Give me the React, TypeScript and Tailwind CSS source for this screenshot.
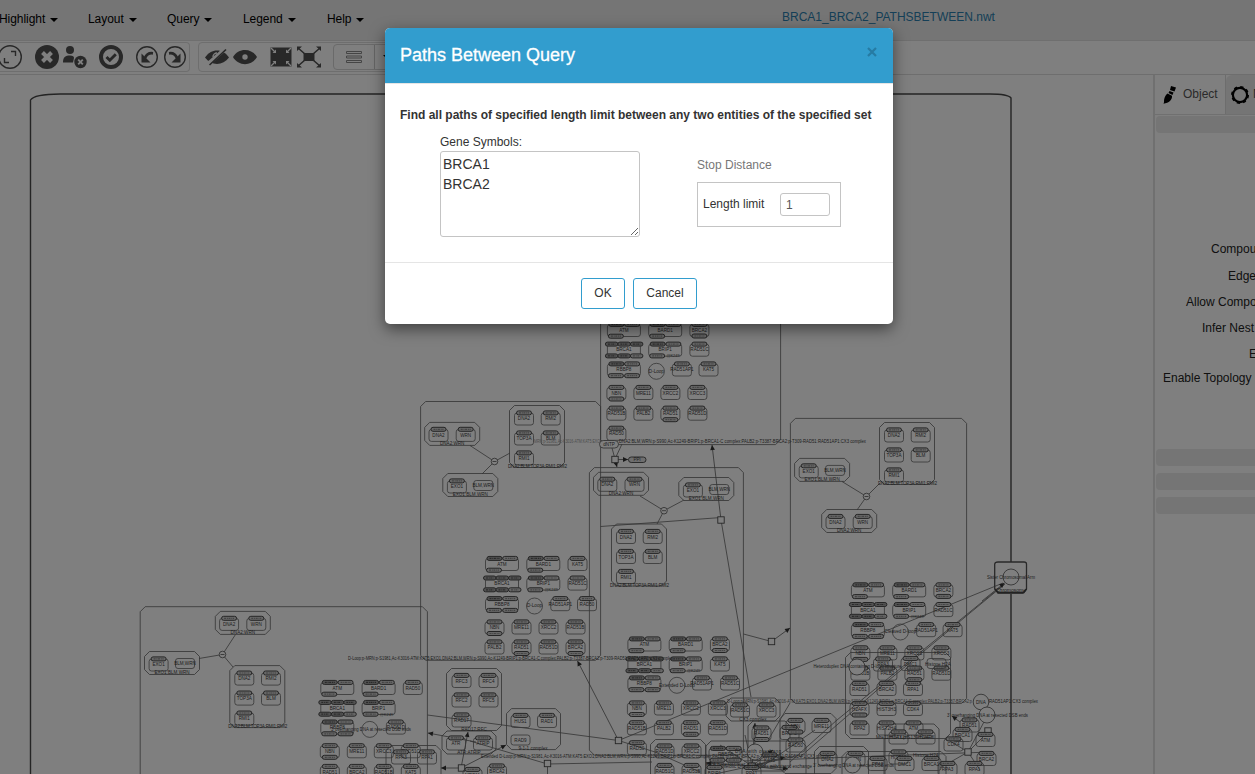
import React from "react";

const INK = "#6a6a6a";
const TXT = "#404040";

function Pill({ x, y, w = 15, dark = false }: { x: number; y: number; w?: number; dark?: boolean }) {
  return (
    <g>
      <rect x={x} y={y - 2} width={w} height={4} rx={2} fill={dark ? "#a4a4a4" : "#cfcfcf"} stroke="#4a4a4a" strokeWidth={1} />
      <path d={`M${x + 2.5} ${y}H${x + w - 2.5}`} stroke={dark ? "#555" : "#888"} strokeWidth={1.2} strokeDasharray="2 .8 1 .6" />
    </g>
  );
}

type NodeProps = { x: number; y: number; t: string; bottom?: boolean; plain?: boolean };

/* Small macromolecule; y is the vertical centre of its label. */
function Gene({ x, y, t, bottom, plain }: NodeProps) {
  return (
    <g>
      <rect x={x} y={plain ? y - 5 : y - 5.5} width={19} height={plain ? 10 : 12} rx={2.5} fill="none" stroke={INK} strokeWidth={0.8} />
      {!plain && <Pill x={x + 2} y={y - 5.6} />}
      {bottom && <Pill x={x + 2} y={y + 6} />}
      <text x={x + 9.5} y={y + 1.6} textAnchor="middle">{t}</text>
    </g>
  );
}

/* Wide macromolecule with several state variables. */
function Wide({ x, y, t, kind }: { x: number; y: number; t: string; kind: "one" | "two" | "three" }) {
  return (
    <g>
      <rect x={x} y={y - 5.5} width={33} height={12} rx={2.5} fill="none" stroke={INK} strokeWidth={0.8} />
      {kind === "three" ? (
        [-2, 10.5, 23].map((d) => (
          <g key={d}>
            <Pill x={x + d} y={y - 5.6} w={12.5} dark />
            <Pill x={x + d} y={y + 6.2} w={12.5} dark={d < 20} />
          </g>
        ))
      ) : (
        <>
          <Pill x={x + 1.5} y={y - 5.6} dark />
          <Pill x={x + 17.2} y={y - 5.6} />
          <Pill x={x + 1} y={y + 6.2} />
          {kind === "two" && <Pill x={x + 17.2} y={y + 6.2} />}
        </>
      )}
      <text x={x + 16.5} y={y + 1.6} textAnchor="middle">{t}</text>
    </g>
  );
}

function Oct({ x, y, w, h, c = 5, s = "#666", sw = 0.8 }: { x: number; y: number; w: number; h: number; c?: number; s?: string; sw?: number }) {
  return (
    <path
      d={`M${x + c} ${y}H${x + w - c}L${x + w} ${y + c}V${y + h - c}L${x + w - c} ${y + h}H${x + c}L${x} ${y + h - c}V${y + c}Z`}
      fill="none"
      stroke={s}
      strokeWidth={sw}
    />
  );
}

function Dna2Wrn({ x, y }: { x: number; y: number }) {
  return (
    <g>
      <Oct x={x} y={y} w={55} h={23} />
      <Gene x={x + 4.3} y={y + 12.5} t="DNA2" />
      <Gene x={x + 31.5} y={y + 12.5} t="WRN" />
      <text x={x + 27.5} y={y + 22.6} textAnchor="middle">DNA2:WRN</text>
    </g>
  );
}

function Exo1({ x, y }: { x: number; y: number }) {
  return (
    <g>
      <Oct x={x} y={y} w={55} h={23} />
      <Gene x={x + 4.6} y={y + 13} t="EXO1" />
      <Gene x={x + 31} y={y + 12} t="BLM,WRN" plain />
      <text x={x + 27.5} y={y + 22.8} textAnchor="middle">EXO1:BLM,WRN</text>
    </g>
  );
}

function Five({ x, y }: { x: number; y: number }) {
  return (
    <g>
      <Oct x={x} y={y} w={55} h={62} />
      <Gene x={x + 5} y={y + 13} t="DNA2" />
      <Gene x={x + 31.7} y={y + 13} t="RMI2" />
      <Gene x={x + 5} y={y + 33} t="TOP3A" />
      <Gene x={x + 31.7} y={y + 33} t="BLM" />
      <Gene x={x + 5} y={y + 53} t="RMI1" />
      <text x={x + 28} y={y + 62.5} textAnchor="middle" textLength={59}>DNA2:BLM:TOP3A:RMI1:RMI2</text>
    </g>
  );
}

type ClusterProps = {
  x: number;
  y: number;
  third: string;
  fourth: string;
  circle: string;
  pair: [string, number, string, number];
  rowA: string[];
  rowB: string[];
  bottomB?: number[];
  last?: string;
  dy?: number[];
};

function Cluster({ x, y, third, fourth, circle, pair, rowA, rowB, bottomB = [2], last, dy = [19.7, 39.5, 63, 83.7] }: ClusterProps) {
  const cols = [-0.5, 26.5, 53.5, 80.5];
  return (
    <g>
      <Wide x={x} y={y} t="ATM" kind="one" />
      <Wide x={x + 41.3} y={y} t="BARD1" kind="one" />
      <Gene x={x + 82.5} y={y} t={third} bottom={third === "BRCA2"} />
      <Wide x={x} y={y + dy[0]} t="BRCA1" kind="three" />
      <Wide x={x + 41.3} y={y + dy[0]} t="BRIP1" kind="one" />
      <text x={x + 59} y={y + dy[0] + 7.5} fontSize={4}>@K249</text>
      {fourth && <Gene x={x + 82.5} y={y + dy[0]} t={fourth} />}
      <Wide x={x} y={y + dy[1]} t="RBBP8" kind="two" />
      <circle cx={x + 49} cy={y + dy[1] + 1.8} r={8} fill="none" stroke={INK} strokeWidth={0.8} />
      <text x={x + 49} y={y + dy[1] + 3.2} textAnchor="middle">{circle}</text>
      {pair[0] && <Gene x={x + pair[1]} y={y + dy[1]} t={pair[0]} />}
      {pair[2] && <Gene x={x + pair[3]} y={y + dy[1]} t={pair[2]} />}
      {rowA.map((t, i) => <Gene key={t} x={x + cols[i]} y={y + dy[2]} t={t} bottom={i === 0} />)}
      {rowB.map((t, i) => <Gene key={t + i} x={x + cols[i]} y={y + dy[3]} t={t} bottom={bottomB.includes(i)} />)}
      {last && <Gene x={x - 0.5} y={y + 103.8} t={last} />}
    </g>
  );
}

function Proc({ x, y }: { x: number; y: number }) {
  return <rect x={x - 3.2} y={y - 3.2} width={6.4} height={6.4} fill="#fff" stroke="#4a4a4a" strokeWidth={0.9} />;
}

function Assoc({ x, y }: { x: number; y: number }) {
  return (
    <g stroke="#555" strokeWidth={0.8}>
      <circle cx={x} cy={y} r={3.3} fill="#fff" />
      <path d={`M${x - 2} ${y}h4`} />
    </g>
  );
}

function Arrow({ x1, y1, x2, y2 }: { x1: number; y1: number; x2: number; y2: number }) {
  const a = (Math.atan2(y2 - y1, x2 - x1) * 180) / Math.PI;
  return (
    <g>
      <path d={`M${x1} ${y1}L${x2} ${y2}`} stroke="#606060" strokeWidth={0.8} />
      <path d="M0 0L-5 2.4V-2.4Z" fill="#333" transform={`translate(${x2} ${y2}) rotate(${a})`} />
    </g>
  );
}

const LONG = "D-Loop:p-MRN:p-S1981,Ac-K3016-ATM:KAT5:EXO1,DNA2:BLM,WRN:p-S990,Ac-K1249-BRIP1:p-BRCA1-C complex:PALB2:p-T3387-BRCA2:p-T309-RAD51:RAD51AP1:CX3 complex";

const TAIL: [number, number, string, boolean?][] = [
  // lower left tangle
  [391.5, 757.5, "RPA3"], [417.5, 757.5, "RPA1"],
  [452, 681, "RFC3"], [479, 681, "RFC4"], [452, 700.5, "RFC2"], [479, 700.5, "RFC5"], [452, 720.5, "RAD17"],
  [446.5, 743.5, "ATR"], [473.5, 743.5, "ATRIP"],
  [511, 721, "HUS1"], [537.5, 721, "RAD1"],
  [463, 775, "MRE11"], [487.5, 771.5, "BRCA2"],
  // complex below the middle cluster
  [655, 751.5, "RAD51D"], [682, 751.5, "XRCC2"], [655, 771, "RAD51C"], [682, 771, "RAD51B"],
  [730.5, 710.5, "RAD51C"], [757, 710.5, "XRCC3"],
  [752, 733.5, "RAD51", true], [780, 733, "BRCA2"], [786, 726, "NBN", true], [812, 726, "MRE11"],
  [786, 745.5, "RAD50"], [760, 760.5, "KAT5"], [705, 773, "BRIP1"], [742, 773, "RPA1"],
  // right-hand complex
  [873.5, 664.5, "RPA3"], [901, 664, "DMC1"], [850, 689, "RAD51"], [877, 689, "BRCA2"], [903.5, 689, "RPA1"],
  [850, 709, "H2AFX", true], [877, 709, "HIST3H3"], [903.5, 709, "CDK4"],
  [850, 728.5, "RPA2"], [877, 728.5, "HIST2H4"], [904, 728.5, "ATM"], [889, 737.5, "HIST12H"], [916, 737.5, "H2AFX"],
  [960, 725.5, "RAD51"], [953, 735, "BRCA1"], [944, 744.5, "CDK4"], [976, 740, "ATM"],
  [977, 759, "BRCA2"], [938, 769, "RPA3"], [965, 769, "RPA1"],
  [818, 759, "DNA2"], [846, 759, "WRN"], [868, 764, "RPA2"], [889, 757.5, "HIST12"], [895, 764, "DMC1"], [922, 764, "BRCA1"],
];

function Graph() {
  return (
    <svg className="block h-full w-full" viewBox="0 75 1153 699" preserveAspectRatio="xMinYMin slice" fill="none" fontFamily="Liberation Sans, Arial, sans-serif" fontSize={4.6}>
      <g fill={TXT} stroke="none">
        <path d="M30.5 774V100Q34 94.3 60 94H990Q1008 94 1011 98V562M1011 594V774" fill="none" stroke="#484848" strokeWidth={1.4} />

        {/* compartments */}
        <Oct x={420.6} y={401.5} w={180} h={258.8} />
        <Oct x={600.6} y={300} w={180} h={144.6} />
        <Oct x={589.4} y={467.6} w={154} h={287.6} />
        <Oct x={790.4} y={418.4} w={176.2} h={285} />
        <Oct x={140.2} y={606.7} w={287.2} h={200} />

        {/* arcs */}
        <g fill="none" stroke="#666" strokeWidth={0.8}>
          <path d="M470 445.500L494.500 461.500L510 453M494.500 461.500L482 474" />
          <path d="M640 496L664 510.700L684 500M664 510.700L657 524" />
          <path d="M842 481.500L866.500 496.500L880 483M866.500 496.500L857 510" />
          <path d="M235.500 634.500L222.500 654.500L199 658.500M222.500 654.500L233 667" />
          <path d="M600.600 526.500L721 517.500M721 520L751 697M743.500 634L771.500 641.500" />
          <path d="M427.500 715L618.500 740.500L1003 583M618.500 740.500L655 752L700 772" />
          <path d="M470 741L547.500 764L652 762M547.500 764V774M744 761L990 752" />
          <path d="M612 448L615 459L622 444M790 762L837 720L1003 585M800 757L883 685L1005 584" />
          <path d="M790 703L767 742M968 752L985 720M968 752L940 768M968 752L985 735M968 752L980 770M968 752L945 738M884 738V774" />
          <path d="M752 766L715 774M752 766L745 735M752 766L800 755M752 766L720 745M752 766L783 770M752 766L757 725M760 768L815 730" />
        </g>
        <Arrow x1={721} y1={520} x2={712} y2={445} />
        <Arrow x1={618.5} y1={740.5} x2={577.5} y2={661} />
        <Arrow x1={771.5} y1={641.5} x2={790} y2={628} />
        <Arrow x1={615} y1={459.5} x2={628} y2={459.5} />
        <Arrow x1={615} y1={459.5} x2={617} y2={467} />
        <Arrow x1={982} y1={601} x2={1004.5} y2={583} />
        <Arrow x1={461} y1={768} x2={468} y2={732} />
        <Arrow x1={461} y1={768} x2={506} y2={745} />
        <Arrow x1={461} y1={768} x2={441} y2={768} />
        <Arrow x1={476} y1={742} x2={428} y2={733} />
        <Arrow x1={960} y1={722} x2={952} y2={716} />
        <Arrow x1={752} y1={766} x2={755} y2={723} />
        <Arrow x1={752} y1={766} x2={773} y2={750} />
        <Arrow x1={752} y1={766} x2={785} y2={757} />
        <Arrow x1={752} y1={766} x2={706} y2={763} />
        <Arrow x1={770} y1={766} x2={788} y2={769} />
        <Assoc x={494.5} y={461.5} />
        <Assoc x={664} y={510.7} />
        <Assoc x={866.5} y={496.5} />
        <Assoc x={222.5} y={654.5} />
        <Proc x={615} y={459.5} /><Proc x={721} y={520} /><Proc x={771.5} y={641.5} /><Proc x={618.5} y={740.5} />
        <Proc x={547.5} y={763.5} /><Proc x={461.5} y={768} /><Proc x={752} y={766} /><Proc x={968} y={752} /><Proc x={988} y={731} />

        {/* complexes */}
        <Dna2Wrn x={424.7} y={422.4} /><Five x={509.5} y={405.5} /><Exo1 x={442.8} y={473.5} />
        <Dna2Wrn x={593.5} y={472.3} /><Exo1 x={678.8} y={477.5} /><Five x={611.5} y={524} />
        <Exo1 x={794.6} y={458.4} /><Five x={879.5} y={422.5} /><Dna2Wrn x={821.7} y={509.5} />
        <Dna2Wrn x={215.3} y={611.4} /><Exo1 x={144.5} y={651.5} /><Five x={229.8} y={665.6} />
        <Oct x={446.5} y={668.5} w={55} h={62} /><Oct x={442} y={731} w={54} h={23} />
        <Oct x={506.5} y={708.6} w={54} h={41} />
        <Gene x={511} y={740} t="RAD9" plain />
        <text x={474} y={730.5} textAnchor="middle">RAD17:RFC</text>
        <text x={469} y={753.5} textAnchor="middle">ATR:ATRIP</text>
        <text x={533} y={749.5} textAnchor="middle">9-1-1 complex</text>
        <Oct x={726} y={698} w={54} h={23} /><text x={753} y={720.5} textAnchor="middle">CX3 complex</text>
        <Oct x={845.5} y={652.5} w={105} h={86} /><Oct x={650.5} y={739.5} w={55} h={60} /><Oct x={706} y={741} w={100} h={60} />
        <Oct x={780} y={713.5} w={56} h={60} /><Oct x={885} y={724} w={54} h={60} /><Oct x={814.5} y={746.5} w={54} h={40} />
        <Oct x={842} y={751.5} w={104} h={50} /><Oct x={386} y={745.5} w={55} h={50} /><Oct x={748} y={721} w={42} h={50} />
        <Wide x={709} y={754} t="RBBP8" kind="two" />

        {/* clusters */}
        <Cluster x={607.4} y={330} third="BRCA2" fourth="RAD51C" circle="D-Loop" pair={["RAD51AP1", 65, "KAT5", 91.6]}
          rowA={["NBN", "MRE11", "XRCC2", "XRCC3"]} rowB={["RAD51B", "PALB2", "RAD51", "RAD51D"]} last="RAD50" />
        <Cluster x={485.5} y={564} third="KAT5" fourth="RAD51C" circle="D-Loop" pair={["RAD51AP1", 65.3, "RAD50", 92]}
          rowA={["NBN", "MRE11", "XRCC2", "RAD51B"]} rowB={["PALB2", "RAD51", "RAD51D", "BRCA2"]} bottomB={[1, 3]} dy={[19.6, 40.2, 63.5, 83.5]} />
        <Cluster x={627.9} y={644.5} third="BRCA2" fourth="KAT5" circle="Extended D-Loop" pair={["RAD51AP1", 64.6, "RAD51C", 92.6]}
          rowA={["NBN", "MRE11", "XRCC2", "XRCC3"]} rowB={["RAD51B", "PALB2", "RAD51", "RAD51D"]} last="RAD50" dy={[20, 39, 64, 83.8]} />
        <Cluster x={320.8} y={688} third="RAD50" fourth="" circle="" pair={["RAD51D", 65.6, "", 0]}
          rowA={["NBN", "MRE11", "XRCC3", "RAD51C"]} rowB={["RAD51", "BRCA2", "RAD51B", "KAT5"]} bottomB={[]} dy={[20, 39.6, 63.3, 84]} />
        <Cluster x={851.4} y={590.4} third="BRCA2" fourth="RAD51C" circle="Cleaved D-loop" pair={["RAD51AP1", 65.3, "KAT5", 91.7]}
          rowA={["NBN", "MRE11", "XRCC2", "XRCC3"]} rowB={["RAD51B", "PALB2", "RAD51", "RAD51D"]} dy={[19.7, 39.8, 63, 83.3]} />
        {TAIL.map(([x, y, t, b], i) => <Gene key={i} x={x} y={y} t={t} bottom={b} />)}

        {/* DNA circles */}
        <g stroke="#555" strokeWidth={0.8} fill="#fff">
          <circle cx={857} cy={667} r={8} /><circle cx={981} cy={702} r={7.8} /><circle cx={987} cy={715} r={8} />
          <circle cx={852.5} cy={765} r={8} /><circle cx={755} cy={752} r={8} />
        </g>
        <rect x={927} y={658.5} width={19} height={10} rx={3} fill="none" stroke={INK} strokeWidth={0.8} />
        <text x={813.5} y={668} textLength={88} lengthAdjust="spacingAndGlyphs">Heteroduplex DNA containing D-loop structure</text>
        <text x={925} y={665.5}>Histone H2A</text>
        <text x={976} y={703.5}>DNA</text>
        <text x={947} y={716.5} textLength={81} lengthAdjust="spacingAndGlyphs">3' overhanging DNA at resected DSB ends</text>
        <text x={813} y={767} textLength={81} lengthAdjust="spacingAndGlyphs">3' overhanging DNA at resected DSB ends</text>
        <text x={331} y={731} textLength={80} lengthAdjust="spacingAndGlyphs">3' overhanging DNA at resected DSB ends</text>
        <text x={876} y={738.5}>Mre11:H2AX:p-S139-H2AFX</text>
        <text x={913} y={756.5}>Histone H2A</text>
        <text x={735} y={753} textLength={46}>DNA with overhang</text>
        <text x={722} y={768} textLength={90} lengthAdjust="spacingAndGlyphs">Meiotic D-loop complex with strand exchange</text>
        <text x={706} y={766} textLength={60}>RPA heterotrimer complex</text>

        <rect x={599.5} y={440.5} width={19} height={7.5} rx={3.7} fill="#fff" stroke={INK} strokeWidth={0.9} />
        <text x={609} y={446} textAnchor="middle">dNTP</text>
        <rect x={628.5} y={457} width={17.5} height={5.5} rx={2.7} fill="#ddd" stroke="#444" strokeWidth={0.9} />
        <text x={637} y={461.3} textAnchor="middle">PPi</text>

        <text x={619} y={443.3} textLength={247} lengthAdjust="spacingAndGlyphs">{LONG.slice(44)}</text>
        <text x={534} y={443.3} fill="#999" textLength={66} lengthAdjust="spacingAndGlyphs">{LONG.slice(9, 42)}</text>
        <text x={348} y={660} textLength={325} lengthAdjust="spacingAndGlyphs">{LONG}</text>
        <text x={481} y={758} textLength={350} lengthAdjust="spacingAndGlyphs">{"Extended " + LONG}</text>
        <text x={727} y={703.4} textLength={245} fill="#606060" lengthAdjust="spacingAndGlyphs">{LONG.slice(0, 118)}</text>
        <text x={989} y={703.4} textLength={49} lengthAdjust="spacingAndGlyphs">RAD51AP1:CX3 complex</text>

        {/* chromosome */}
        <path d="M994.7 589V564Q995 562 998 562H1024Q1026.5 562 1026.5 564V589L1024 592.5H998Z" fill="none" stroke="#525252" strokeWidth={1.3} />
        <path d="M995 589L998 593H1023L1026.5 589" stroke="#444" strokeWidth={1.3} fill="none" />
        <circle cx={1011} cy={577} r={8} fill="#fff" stroke="#555" strokeWidth={0.8} />
        <text x={987} y={578.5} textLength={48} lengthAdjust="spacingAndGlyphs">Sister Chromosomal Arm</text>
        <text x={996} y={591.6} textLength={30} lengthAdjust="spacingAndGlyphs">Chromosome</text>
      </g>
    </svg>
  );
}

function Icon({ className = "", children }: { className?: string; children: React.ReactNode }) {
  return (
    <svg className={"h-6 w-6 shrink-0 " + className} viewBox="0 0 24 24" fill="none" stroke="#505050" strokeWidth={1.4}>
      {children}
    </svg>
  );
}

function Menu({ label, className = "" }: { label: string; className?: string }) {
  return (
    <div className={"flex shrink-0 items-center gap-[5px] whitespace-nowrap tracking-[-0.05px] " + className}>
      <span>{label}</span>
      <span className="mt-[2px] h-0 w-0 border-x-4 border-t-4 border-x-transparent border-t-black" />
    </div>
  );
}

function Toolbar() {
  return (
    <div className="flex h-[34px] border-b border-[#dcdcdc] bg-white pt-px">
      <div className="flex h-[30px] w-[190px] items-center rounded-r border border-l-0 border-[#dcdcdc]">
        <Icon className="-ml-[2px]">
          <circle cx="12" cy="12" r="11.3" />
          <path d="M13 6.500H17.500V11M11 17.500H6.500V13" />
        </Icon>
        <Icon className="ml-[13px]">
          <circle cx="12" cy="12" r="12" fill="#505050" stroke="none" />
          <path d="M7.500 7.500l9 9M16.500 7.500l-9 9" stroke="#fff" strokeWidth="4" />
        </Icon>
        <Icon className="ml-1">
          <circle cx="7" cy="5" r="4" fill="#505050" stroke="none" />
          <path d="M0 17.500C0 12 2.500 10.500 7 10.500c3 0 4 1 4 2.500l-1 4.500z" fill="#505050" stroke="none" />
          <circle cx="17.500" cy="17" r="6.200" fill="#505050" stroke="none" />
          <path d="M15.200 14.700l4.600 4.600M19.800 14.700l-4.600 4.600" stroke="#fff" strokeWidth="1.900" />
        </Icon>
        <Icon className="ml-3">
          <circle cx="12" cy="12" r="10" strokeWidth="4" />
          <path d="M7.500 12l3.300 3.300 6-6" strokeWidth="2.900" />
        </Icon>
        <Icon className="ml-3">
          <circle cx="12" cy="12" r="10.300" />
          <path d="M18 8.300c-3.500-.5-6.500 1-8 4.700" strokeWidth="2.800" />
          <path d="M6.500 8.500v9h9z" fill="#505050" stroke="none" />
        </Icon>
        <Icon className="ml-1">
          <circle cx="12" cy="12" r="10.300" />
          <path d="M6 8.300c3.500-.5 6.500 1 8 4.700" strokeWidth="2.800" />
          <path d="M17.500 8.500v9h-9z" fill="#505050" stroke="none" />
        </Icon>
      </div>
      <div className="ml-2 flex h-[30px] w-[300px] shrink-0 items-center rounded border border-[#dcdcdc]">
        <Icon className="ml-[6px]">
          <path d="M0 12.500C6 3 18 3 24 12.500 18 21 6 21 0 12.500z" fill="#505050" stroke="none" />
          <path d="M8 12a4 4 0 0 1 4-4" stroke="#fff" />
          <path d="M3 19L20 4" stroke="#fff" strokeWidth="4" />
          <path d="M4.500 20L21 4.500" strokeWidth="1.600" />
        </Icon>
        <Icon className="ml-1">
          <path d="M0 12C5 2.500 19 2.500 24 12 19 21.500 5 21.500 0 12z" fill="#505050" stroke="none" />
          <circle cx="12" cy="12" r="2.700" fill="#fff" stroke="none" />
        </Icon>
        <Icon className="ml-3">
          <path d="M1.500 2.500h21v19h-21z" fill="#505050" stroke="none" />
          <path d="M2 3l4 4M22 3l-4 4M2 21l4-4M22 21l-4-4" stroke="#fff" strokeWidth="1.300" />
          <path d="M7 4.500v3.500h-3.500zM17 4.500v3.500h3.500zM7 19.500v-3.500h-3.500zM17 19.500v-3.500h3.500z" fill="#fff" stroke="none" />
        </Icon>
        <Icon className="ml-1">
          <path d="M6.500 8h11v8h-11z" fill="#505050" stroke="none" />
          <path d="M1 3l7 6M23 3l-7 6M1 21l7-6M23 21l-7-6" strokeWidth="1.600" />
          <path d="M0 1.500h5l-5 4.500zM24 1.500h-5l5 4.500zM0 22.500h5l-5-4.500zM24 22.500h-5l5-4.500z" fill="#505050" stroke="none" />
        </Icon>
        <div className="ml-3 flex h-[26px] w-[90px] items-center rounded border border-[#d4d4d4] bg-white">
          <div className="flex h-full w-[41px] items-center justify-center border-r border-[#c8c8c8]">
            <svg className="h-3 w-4" viewBox="0 0 16 12" fill="none" stroke="#8a8a8a" strokeWidth="1">
              <path d="M.5 .5h15v2H.5zM.5 5h15v2H.5zM.5 9.500h15v2H.5z" />
            </svg>
          </div>
          <span className="ml-2 h-0 w-0 border-x-4 border-t-4 border-x-transparent border-t-black" />
        </div>
      </div>
    </div>
  );
}

function Inspector() {
  const rows: [string, string][] = [
    ["Compou", "ml-[56px] h-[27px]"],
    ["Edge", "ml-[73px] h-[26px]"],
    ["Allow Compo", "ml-[31px] h-[26px]"],
    ["Infer Nest", "ml-[47px] h-[26px]"],
    ["E", "ml-[94px] h-[24px]"],
    ["Enable Topology", "ml-[8px] h-[72px]"],
  ];
  return (
    <div className="w-[102px] shrink-0 overflow-hidden border-l-2 border-[#e0e0e0] bg-white text-xs text-[#222]">
      <div className="flex h-10 border-b border-[#e0e0e0]">
        <div className="flex w-[71px] shrink-0 items-center border-r border-[#dadada] pl-2">
          <svg className="h-[18px] w-[14px] shrink-0" viewBox="0 0 14 18">
            <path d="M8 0l5 1.500-1.500 4L7 4z" fill="#000" />
            <path d="M6.500 5l4 1.500-1 2.500-4-2z" fill="#000" />
            <path d="M4.500 7.500l4.500 2.300c.5 4-3 7.200-8.500 8 1-2 .2-3 .8-5C1.800 10.500 3 8.500 4.500 7.500z" fill="#000" />
          </svg>
          <span className="mb-0.5 ml-[6px] text-[#555]">Object</span>
        </div>
        <div className="flex w-[80px] shrink-0 items-center rounded-tl-md bg-[#ebebeb] pl-[5px]">
          <svg className="h-[18px] w-[18px] shrink-0" viewBox="0 0 18 18" fill="none" stroke="#000">
            <circle cx="9" cy="9" r="7.100" strokeWidth="2.200" />
            <circle cx="9" cy="9" r="8.200" strokeWidth="1.600" strokeDasharray="3.200 3.240" />
          </svg>
          <span className="mb-0.5 ml-1 text-[#555]">Map</span>
        </div>
      </div>
      <div className="mt-px ml-px h-[17px] rounded-l-sm bg-[#ebebeb]" />
      <div className="mt-[108px]">
        {rows.map(([t, c]) => (
          <div key={t} className={"whitespace-nowrap leading-4 " + c}>{t}</div>
        ))}
      </div>
      <div className="mt-[7px] ml-px flex flex-col gap-[7px]">
        <div className="h-[17px] rounded-l-sm bg-[#ebebeb]" />
        <div className="h-[17px] rounded-l-sm bg-[#ebebeb]" />
        <div className="h-[17px] rounded-l-sm bg-[#ebebeb]" />
      </div>
    </div>
  );
}

function Dialog() {
  return (
    <div className="h-[296px] w-[508px] overflow-hidden rounded-[5px] bg-white text-[#333] shadow-[0_5px_15px_rgba(0,0,0,0.5)]">
      <div className="flex h-[56px] justify-between border-b border-[#e5e5e5] bg-[#329dce] px-[15px]">
        <h4 className="pt-[15px] text-[18px] leading-6 text-white [-webkit-text-stroke:0.3px_white]">Paths Between Query</h4>
        <svg className="mt-[19px] mr-px h-[10px] w-[10px]" viewBox="0 0 10 10" fill="none" stroke="#267ba3" strokeWidth="2.200">
          <path d="M1 1l8 8M9 1L1 9" />
        </svg>
      </div>
      <div className="h-[179px] border-b border-[#e5e5e5] px-[15px] pt-[23px]">
        <p className="whitespace-nowrap text-xs leading-4 font-bold">Find all paths of specified length limit between any two entities of the specified set</p>
        <div className="mt-[10px] flex pl-10 text-xs">
          <div className="w-[200px]">
            <div className="leading-[18px]">Gene Symbols:</div>
            <textarea className="block h-[86px] w-[200px] resize rounded-[3px] border border-[#c4c4c4] px-[2px] py-[2px] text-sm leading-5 text-[#333] outline-none" defaultValue={"BRCA1\nBRCA2"} />
          </div>
          <div className="ml-[57px] pt-[23px]">
            <div className="leading-[18px] text-[#777]">Stop Distance</div>
            <div className="mt-2 flex h-[45px] w-[144px] items-center border border-[#c4c4c4] pl-[5px]">
              <span className="mb-0.5 w-[77px] shrink-0">Length limit</span>
              <input className="h-[23px] w-[50px] rounded-[3px] border border-[#c4c4c4] px-[5px] text-xs text-[#555] outline-none" defaultValue="1" />
            </div>
          </div>
        </div>
      </div>
      <div className="flex justify-center gap-2 pt-[15px] text-xs">
        <button className="h-[31px] w-11 rounded-[3px] border border-[#329dce] bg-white pb-px">OK</button>
        <button className="h-[31px] w-16 rounded-[3px] border border-[#329dce] bg-white pb-px">Cancel</button>
      </div>
    </div>
  );
}

export default function App() {
  return (
    <div className="relative flex h-[774px] w-[1255px] flex-col overflow-hidden bg-white font-['Liberation_Sans',Arial,sans-serif]">
      <nav className="flex h-[41px] items-start border-b border-[#dedede] bg-[#ebebeb] pt-[11px] text-xs text-black">
        <Menu label="Highlight" className="-ml-px w-[89px]" />
        <Menu label="Layout" className="w-[79px]" />
        <Menu label="Query" className="w-[76px]" />
        <Menu label="Legend" className="w-[84px]" />
        <Menu label="Help" className="w-[455px]" />
        <span className="-mt-[2px] whitespace-nowrap text-[#2a7fae]">BRCA1_BRCA2_PATHSBETWEEN.nwt</span>
      </nav>
      <Toolbar />
      <div className="flex min-h-0 flex-1">
        <div className="min-w-0 flex-1 overflow-hidden"><Graph /></div>
        <Inspector />
      </div>
      <div className="absolute inset-0 flex items-start justify-center bg-black/50 pt-[28px] pl-[23px]">
        <Dialog />
      </div>
    </div>
  );
}
